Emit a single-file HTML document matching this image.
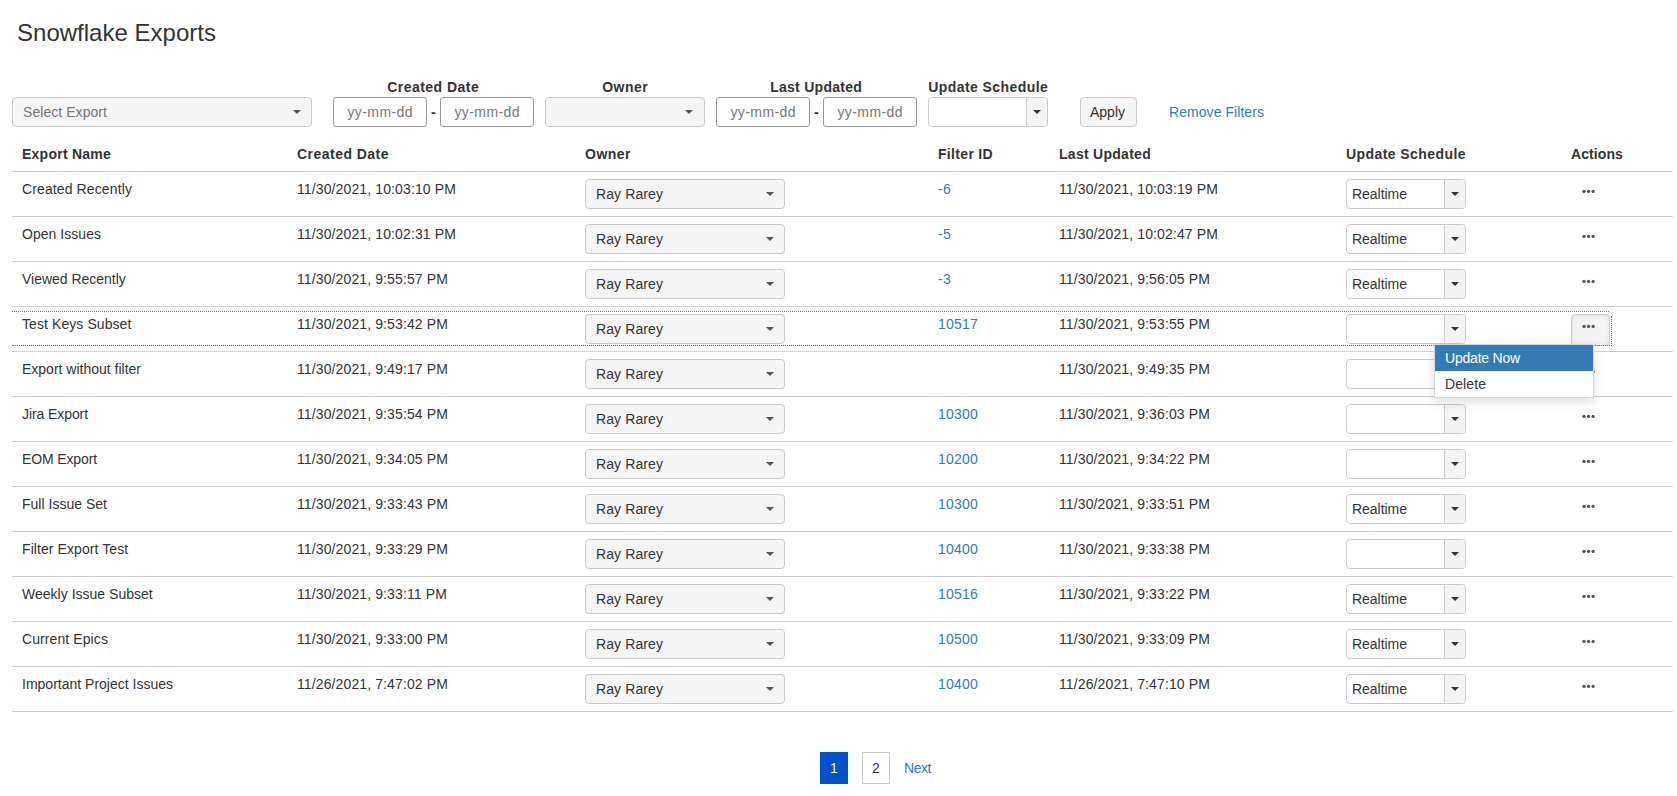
<!DOCTYPE html><html><head><meta charset="utf-8"><style>
*{box-sizing:border-box;margin:0;padding:0}
html,body{width:1677px;height:796px;overflow:hidden;background:#fff}
body{position:relative;font-family:"Liberation Sans",sans-serif;font-size:14px;line-height:16px;color:#333}
.a{position:absolute;white-space:nowrap}
.t{position:absolute;white-space:nowrap;line-height:16px}
.b{font-weight:bold}
.sel{position:absolute;height:30px;border:1px solid #ccc;border-radius:4px;background:#f5f5f5}
.inp{position:absolute;height:30px;border:1px solid #999;border-radius:3px;background:#fff}
.car{position:absolute;width:0;height:0;border-left:4px solid transparent;border-right:4px solid transparent;border-top:4px solid #555}
.rs{position:absolute;height:30px;width:120px;border:1px solid #ccc;border-radius:4px;background:#fff}
.rs .btn{position:absolute;right:0;top:0;bottom:0;width:21px;border-left:1px solid #ccc;background:#f4f4f4;border-radius:0 3px 3px 0}
.hl{position:absolute;left:12px;width:1661px;height:1px;background:#d0d0d0}
.dots{position:absolute;width:14px;height:4px}
.dots i{position:absolute;top:0;width:3.3px;height:3.3px;border-radius:50%;background:#505050}
</style></head><body>
<div class="t" style="top:19px;letter-spacing:0.014px;left:17px;font-size:24px;line-height:28px;">Snowflake Exports</div>
<div class="t b" style="top:79px;letter-spacing:0.470px;left:233px;width:400px;text-align:center;padding-left:0.470px;">Created Date</div>
<div class="t b" style="top:79px;letter-spacing:0.487px;left:425px;width:400px;text-align:center;padding-left:0.487px;">Owner</div>
<div class="t b" style="top:79px;letter-spacing:0.277px;left:616px;width:400px;text-align:center;padding-left:0.277px;">Last Updated</div>
<div class="t b" style="top:79px;letter-spacing:0.428px;left:788px;width:400px;text-align:center;padding-left:0.428px;">Update Schedule</div>
<div class="sel" style="left:12px;top:97px;width:300px"></div>
<div class="t" style="top:104px;letter-spacing:0.060px;left:23px;color:#777;">Select Export</div>
<div class="car" style="left:293px;top:110px"></div>
<div class="inp" style="left:333px;top:97px;width:94px"></div>
<div class="t" style="top:104px;letter-spacing:0.422px;left:180px;width:400px;text-align:center;padding-left:0.422px;color:#777;">yy-mm-dd</div>
<div class="inp" style="left:440px;top:97px;width:94px"></div>
<div class="t" style="top:104px;letter-spacing:0.422px;left:287px;width:400px;text-align:center;padding-left:0.422px;color:#777;">yy-mm-dd</div>
<div class="inp" style="left:716px;top:97px;width:94px"></div>
<div class="t" style="top:104px;letter-spacing:0.422px;left:563px;width:400px;text-align:center;padding-left:0.422px;color:#777;">yy-mm-dd</div>
<div class="inp" style="left:823px;top:97px;width:94px"></div>
<div class="t" style="top:104px;letter-spacing:0.422px;left:670px;width:400px;text-align:center;padding-left:0.422px;color:#777;">yy-mm-dd</div>
<div class="t b" style="top:104px;letter-spacing:0.338px;left:431px;">-</div>
<div class="t b" style="top:104px;letter-spacing:0.338px;left:814px;">-</div>
<div class="sel" style="left:545px;top:97px;width:160px"></div>
<div class="car" style="left:685px;top:110px"></div>
<div class="rs" style="left:928px;top:97px"><div class="btn"></div></div>
<div class="car" style="left:1033px;top:110px;border-top-color:#333"></div>
<div class="sel" style="left:1080px;top:97px;width:57px"></div>
<div class="t" style="top:104px;letter-spacing:-0.004px;left:1090px;">Apply</div>
<div class="t" style="top:104px;letter-spacing:0.062px;left:1169px;color:#337ab7;">Remove Filters</div>
<div class="t b" style="top:146px;letter-spacing:0.240px;left:22px;">Export Name</div>
<div class="t b" style="top:146px;letter-spacing:0.470px;left:297px;">Created Date</div>
<div class="t b" style="top:146px;letter-spacing:0.487px;left:585px;">Owner</div>
<div class="t b" style="top:146px;letter-spacing:0.320px;left:938px;">Filter ID</div>
<div class="t b" style="top:146px;letter-spacing:0.277px;left:1059px;">Last Updated</div>
<div class="t b" style="top:146px;letter-spacing:0.428px;left:1346px;">Update Schedule</div>
<div class="t b" style="top:146px;letter-spacing:0.095px;left:1571px;">Actions</div>
<div class="hl" style="top:171px"></div>
<div class="hl" style="top:216px"></div>
<div class="hl" style="top:261px"></div>
<div class="hl" style="top:306px"></div>
<div class="hl" style="top:351px"></div>
<div class="hl" style="top:396px"></div>
<div class="hl" style="top:441px"></div>
<div class="hl" style="top:486px"></div>
<div class="hl" style="top:531px"></div>
<div class="hl" style="top:576px"></div>
<div class="hl" style="top:621px"></div>
<div class="hl" style="top:666px"></div>
<div class="hl" style="top:711px"></div>
<div class="t" style="top:181px;letter-spacing:0.115px;left:22px;">Created Recently</div>
<div class="t" style="top:181px;letter-spacing:0.120px;left:297px;">11/30/2021, 10:03:10 PM</div>
<div class="sel" style="left:585px;top:179px;width:200px"></div>
<div class="t" style="top:186px;letter-spacing:0.097px;left:596px;">Ray Rarey</div>
<div class="car" style="left:766px;top:192px"></div>
<div class="t" style="top:181px;letter-spacing:0.276px;left:938px;color:#337ab7;">-6</div>
<div class="t" style="top:181px;letter-spacing:0.120px;left:1059px;">11/30/2021, 10:03:19 PM</div>
<div class="rs" style="left:1346px;top:179px"><div class="btn"></div></div>
<div class="car" style="left:1451px;top:192px;border-top-color:#333"></div>
<div class="t" style="top:186px;letter-spacing:-0.030px;left:1352px;">Realtime</div>
<svg class="a" style="left:1580px;top:187px" width="18" height="8"><g fill="#555"><circle cx="4" cy="4.4" r="1.65"/><circle cx="8.6" cy="4.4" r="1.65"/><circle cx="13.1" cy="4.4" r="1.65"/></g></svg>
<div class="t" style="top:226px;letter-spacing:0.036px;left:22px;">Open Issues</div>
<div class="t" style="top:226px;letter-spacing:0.120px;left:297px;">11/30/2021, 10:02:31 PM</div>
<div class="sel" style="left:585px;top:224px;width:200px"></div>
<div class="t" style="top:231px;letter-spacing:0.097px;left:596px;">Ray Rarey</div>
<div class="car" style="left:766px;top:237px"></div>
<div class="t" style="top:226px;letter-spacing:0.276px;left:938px;color:#337ab7;">-5</div>
<div class="t" style="top:226px;letter-spacing:0.120px;left:1059px;">11/30/2021, 10:02:47 PM</div>
<div class="rs" style="left:1346px;top:224px"><div class="btn"></div></div>
<div class="car" style="left:1451px;top:237px;border-top-color:#333"></div>
<div class="t" style="top:231px;letter-spacing:-0.030px;left:1352px;">Realtime</div>
<svg class="a" style="left:1580px;top:232px" width="18" height="8"><g fill="#555"><circle cx="4" cy="4.4" r="1.65"/><circle cx="8.6" cy="4.4" r="1.65"/><circle cx="13.1" cy="4.4" r="1.65"/></g></svg>
<div class="t" style="top:271px;letter-spacing:-0.018px;left:22px;">Viewed Recently</div>
<div class="t" style="top:271px;letter-spacing:0.116px;left:297px;">11/30/2021, 9:55:57 PM</div>
<div class="sel" style="left:585px;top:269px;width:200px"></div>
<div class="t" style="top:276px;letter-spacing:0.097px;left:596px;">Ray Rarey</div>
<div class="car" style="left:766px;top:282px"></div>
<div class="t" style="top:271px;letter-spacing:0.276px;left:938px;color:#337ab7;">-3</div>
<div class="t" style="top:271px;letter-spacing:0.116px;left:1059px;">11/30/2021, 9:56:05 PM</div>
<div class="rs" style="left:1346px;top:269px"><div class="btn"></div></div>
<div class="car" style="left:1451px;top:282px;border-top-color:#333"></div>
<div class="t" style="top:276px;letter-spacing:-0.030px;left:1352px;">Realtime</div>
<svg class="a" style="left:1580px;top:277px" width="18" height="8"><g fill="#555"><circle cx="4" cy="4.4" r="1.65"/><circle cx="8.6" cy="4.4" r="1.65"/><circle cx="13.1" cy="4.4" r="1.65"/></g></svg>
<div class="t" style="top:316px;letter-spacing:0.080px;left:22px;">Test Keys Subset</div>
<div class="t" style="top:316px;letter-spacing:0.116px;left:297px;">11/30/2021, 9:53:42 PM</div>
<div class="sel" style="left:585px;top:314px;width:200px"></div>
<div class="t" style="top:321px;letter-spacing:0.097px;left:596px;">Ray Rarey</div>
<div class="car" style="left:766px;top:327px"></div>
<div class="t" style="top:316px;letter-spacing:0.214px;left:938px;color:#337ab7;">10517</div>
<div class="t" style="top:316px;letter-spacing:0.116px;left:1059px;">11/30/2021, 9:53:55 PM</div>
<div class="rs" style="left:1346px;top:314px"><div class="btn"></div></div>
<div class="car" style="left:1451px;top:327px;border-top-color:#333"></div>
<div class="a" style="left:1571px;top:314px;width:39px;height:32px;border:1px solid #ccc;border-radius:4px;background:#f3f3f3;box-shadow:inset 0 0 5px rgba(0,0,0,.09)"></div>
<svg class="a" style="left:1580px;top:322px" width="18" height="8"><g fill="#555"><circle cx="4" cy="4.4" r="1.65"/><circle cx="8.6" cy="4.4" r="1.65"/><circle cx="13.1" cy="4.4" r="1.65"/></g></svg>
<div class="t" style="top:361px;letter-spacing:-0.002px;left:22px;">Export without filter</div>
<div class="t" style="top:361px;letter-spacing:0.116px;left:297px;">11/30/2021, 9:49:17 PM</div>
<div class="sel" style="left:585px;top:359px;width:200px"></div>
<div class="t" style="top:366px;letter-spacing:0.097px;left:596px;">Ray Rarey</div>
<div class="car" style="left:766px;top:372px"></div>
<div class="t" style="top:361px;letter-spacing:0.116px;left:1059px;">11/30/2021, 9:49:35 PM</div>
<div class="rs" style="left:1346px;top:359px"><div class="btn"></div></div>
<div class="car" style="left:1451px;top:372px;border-top-color:#333"></div>
<svg class="a" style="left:1580px;top:367px" width="18" height="8"><g fill="#555"><circle cx="4" cy="4.4" r="1.65"/><circle cx="8.6" cy="4.4" r="1.65"/><circle cx="13.1" cy="4.4" r="1.65"/></g></svg>
<div class="t" style="top:406px;letter-spacing:-0.083px;left:22px;">Jira Export</div>
<div class="t" style="top:406px;letter-spacing:0.116px;left:297px;">11/30/2021, 9:35:54 PM</div>
<div class="sel" style="left:585px;top:404px;width:200px"></div>
<div class="t" style="top:411px;letter-spacing:0.097px;left:596px;">Ray Rarey</div>
<div class="car" style="left:766px;top:417px"></div>
<div class="t" style="top:406px;letter-spacing:0.214px;left:938px;color:#337ab7;">10300</div>
<div class="t" style="top:406px;letter-spacing:0.116px;left:1059px;">11/30/2021, 9:36:03 PM</div>
<div class="rs" style="left:1346px;top:404px"><div class="btn"></div></div>
<div class="car" style="left:1451px;top:417px;border-top-color:#333"></div>
<svg class="a" style="left:1580px;top:412px" width="18" height="8"><g fill="#555"><circle cx="4" cy="4.4" r="1.65"/><circle cx="8.6" cy="4.4" r="1.65"/><circle cx="13.1" cy="4.4" r="1.65"/></g></svg>
<div class="t" style="top:451px;letter-spacing:-0.124px;left:22px;">EOM Export</div>
<div class="t" style="top:451px;letter-spacing:0.116px;left:297px;">11/30/2021, 9:34:05 PM</div>
<div class="sel" style="left:585px;top:449px;width:200px"></div>
<div class="t" style="top:456px;letter-spacing:0.097px;left:596px;">Ray Rarey</div>
<div class="car" style="left:766px;top:462px"></div>
<div class="t" style="top:451px;letter-spacing:0.214px;left:938px;color:#337ab7;">10200</div>
<div class="t" style="top:451px;letter-spacing:0.116px;left:1059px;">11/30/2021, 9:34:22 PM</div>
<div class="rs" style="left:1346px;top:449px"><div class="btn"></div></div>
<div class="car" style="left:1451px;top:462px;border-top-color:#333"></div>
<svg class="a" style="left:1580px;top:457px" width="18" height="8"><g fill="#555"><circle cx="4" cy="4.4" r="1.65"/><circle cx="8.6" cy="4.4" r="1.65"/><circle cx="13.1" cy="4.4" r="1.65"/></g></svg>
<div class="t" style="top:496px;letter-spacing:0.013px;left:22px;">Full Issue Set</div>
<div class="t" style="top:496px;letter-spacing:0.116px;left:297px;">11/30/2021, 9:33:43 PM</div>
<div class="sel" style="left:585px;top:494px;width:200px"></div>
<div class="t" style="top:501px;letter-spacing:0.097px;left:596px;">Ray Rarey</div>
<div class="car" style="left:766px;top:507px"></div>
<div class="t" style="top:496px;letter-spacing:0.214px;left:938px;color:#337ab7;">10300</div>
<div class="t" style="top:496px;letter-spacing:0.116px;left:1059px;">11/30/2021, 9:33:51 PM</div>
<div class="rs" style="left:1346px;top:494px"><div class="btn"></div></div>
<div class="car" style="left:1451px;top:507px;border-top-color:#333"></div>
<div class="t" style="top:501px;letter-spacing:-0.030px;left:1352px;">Realtime</div>
<svg class="a" style="left:1580px;top:502px" width="18" height="8"><g fill="#555"><circle cx="4" cy="4.4" r="1.65"/><circle cx="8.6" cy="4.4" r="1.65"/><circle cx="13.1" cy="4.4" r="1.65"/></g></svg>
<div class="t" style="top:541px;letter-spacing:0.079px;left:22px;">Filter Export Test</div>
<div class="t" style="top:541px;letter-spacing:0.116px;left:297px;">11/30/2021, 9:33:29 PM</div>
<div class="sel" style="left:585px;top:539px;width:200px"></div>
<div class="t" style="top:546px;letter-spacing:0.097px;left:596px;">Ray Rarey</div>
<div class="car" style="left:766px;top:552px"></div>
<div class="t" style="top:541px;letter-spacing:0.214px;left:938px;color:#337ab7;">10400</div>
<div class="t" style="top:541px;letter-spacing:0.116px;left:1059px;">11/30/2021, 9:33:38 PM</div>
<div class="rs" style="left:1346px;top:539px"><div class="btn"></div></div>
<div class="car" style="left:1451px;top:552px;border-top-color:#333"></div>
<svg class="a" style="left:1580px;top:547px" width="18" height="8"><g fill="#555"><circle cx="4" cy="4.4" r="1.65"/><circle cx="8.6" cy="4.4" r="1.65"/><circle cx="13.1" cy="4.4" r="1.65"/></g></svg>
<div class="t" style="top:586px;letter-spacing:0.015px;left:22px;">Weekly Issue Subset</div>
<div class="t" style="top:586px;letter-spacing:0.116px;left:297px;">11/30/2021, 9:33:11 PM</div>
<div class="sel" style="left:585px;top:584px;width:200px"></div>
<div class="t" style="top:591px;letter-spacing:0.097px;left:596px;">Ray Rarey</div>
<div class="car" style="left:766px;top:597px"></div>
<div class="t" style="top:586px;letter-spacing:0.214px;left:938px;color:#337ab7;">10516</div>
<div class="t" style="top:586px;letter-spacing:0.116px;left:1059px;">11/30/2021, 9:33:22 PM</div>
<div class="rs" style="left:1346px;top:584px"><div class="btn"></div></div>
<div class="car" style="left:1451px;top:597px;border-top-color:#333"></div>
<div class="t" style="top:591px;letter-spacing:-0.030px;left:1352px;">Realtime</div>
<svg class="a" style="left:1580px;top:592px" width="18" height="8"><g fill="#555"><circle cx="4" cy="4.4" r="1.65"/><circle cx="8.6" cy="4.4" r="1.65"/><circle cx="13.1" cy="4.4" r="1.65"/></g></svg>
<div class="t" style="top:631px;letter-spacing:0.092px;left:22px;">Current Epics</div>
<div class="t" style="top:631px;letter-spacing:0.116px;left:297px;">11/30/2021, 9:33:00 PM</div>
<div class="sel" style="left:585px;top:629px;width:200px"></div>
<div class="t" style="top:636px;letter-spacing:0.097px;left:596px;">Ray Rarey</div>
<div class="car" style="left:766px;top:642px"></div>
<div class="t" style="top:631px;letter-spacing:0.214px;left:938px;color:#337ab7;">10500</div>
<div class="t" style="top:631px;letter-spacing:0.116px;left:1059px;">11/30/2021, 9:33:09 PM</div>
<div class="rs" style="left:1346px;top:629px"><div class="btn"></div></div>
<div class="car" style="left:1451px;top:642px;border-top-color:#333"></div>
<div class="t" style="top:636px;letter-spacing:-0.030px;left:1352px;">Realtime</div>
<svg class="a" style="left:1580px;top:637px" width="18" height="8"><g fill="#555"><circle cx="4" cy="4.4" r="1.65"/><circle cx="8.6" cy="4.4" r="1.65"/><circle cx="13.1" cy="4.4" r="1.65"/></g></svg>
<div class="t" style="top:676px;letter-spacing:0.002px;left:22px;">Important Project Issues</div>
<div class="t" style="top:676px;letter-spacing:0.116px;left:297px;">11/26/2021, 7:47:02 PM</div>
<div class="sel" style="left:585px;top:674px;width:200px"></div>
<div class="t" style="top:681px;letter-spacing:0.097px;left:596px;">Ray Rarey</div>
<div class="car" style="left:766px;top:687px"></div>
<div class="t" style="top:676px;letter-spacing:0.214px;left:938px;color:#337ab7;">10400</div>
<div class="t" style="top:676px;letter-spacing:0.116px;left:1059px;">11/26/2021, 7:47:10 PM</div>
<div class="rs" style="left:1346px;top:674px"><div class="btn"></div></div>
<div class="car" style="left:1451px;top:687px;border-top-color:#333"></div>
<div class="t" style="top:681px;letter-spacing:-0.030px;left:1352px;">Realtime</div>
<svg class="a" style="left:1580px;top:682px" width="18" height="8"><g fill="#555"><circle cx="4" cy="4.4" r="1.65"/><circle cx="8.6" cy="4.4" r="1.65"/><circle cx="13.1" cy="4.4" r="1.65"/></g></svg>
<div class="a" style="left:12px;top:311px;width:1597px;height:1px;border-top:1px dotted #707070"></div>
<div class="a" style="left:12px;top:345px;width:1600px;height:1px;border-top:1px dotted #707070"></div>
<div class="a" style="left:1611px;top:316px;width:1px;height:28px;border-left:1px dotted #707070"></div>
<div class="a" style="left:1434px;top:344px;width:160px;height:54px;background:#fff;border:1px solid rgba(0,0,0,.15);box-shadow:0 5px 10px rgba(0,0,0,.13)"><div class="a" style="left:0;right:0;top:0;height:26px;background:#337ab7"></div><div class="t" style="top:5px;letter-spacing:-0.204px;left:10px;color:#fff;">Update Now</div><div class="t" style="top:31px;letter-spacing:0.089px;left:10px;">Delete</div></div>
<div class="a" style="left:820px;top:752px;width:28px;height:32px;background:#0052cc"></div>
<div class="t" style="top:760px;letter-spacing:0.214px;left:634px;width:400px;text-align:center;padding-left:0.214px;color:#fff;">1</div>
<div class="a" style="left:862px;top:752px;width:28px;height:32px;border:1px solid #ccc"></div>
<div class="t" style="top:760px;letter-spacing:0.214px;left:676px;width:400px;text-align:center;padding-left:0.214px;">2</div>
<div class="t" style="top:760px;letter-spacing:-0.447px;left:904px;color:#337ab7;">Next</div>
</body></html>
